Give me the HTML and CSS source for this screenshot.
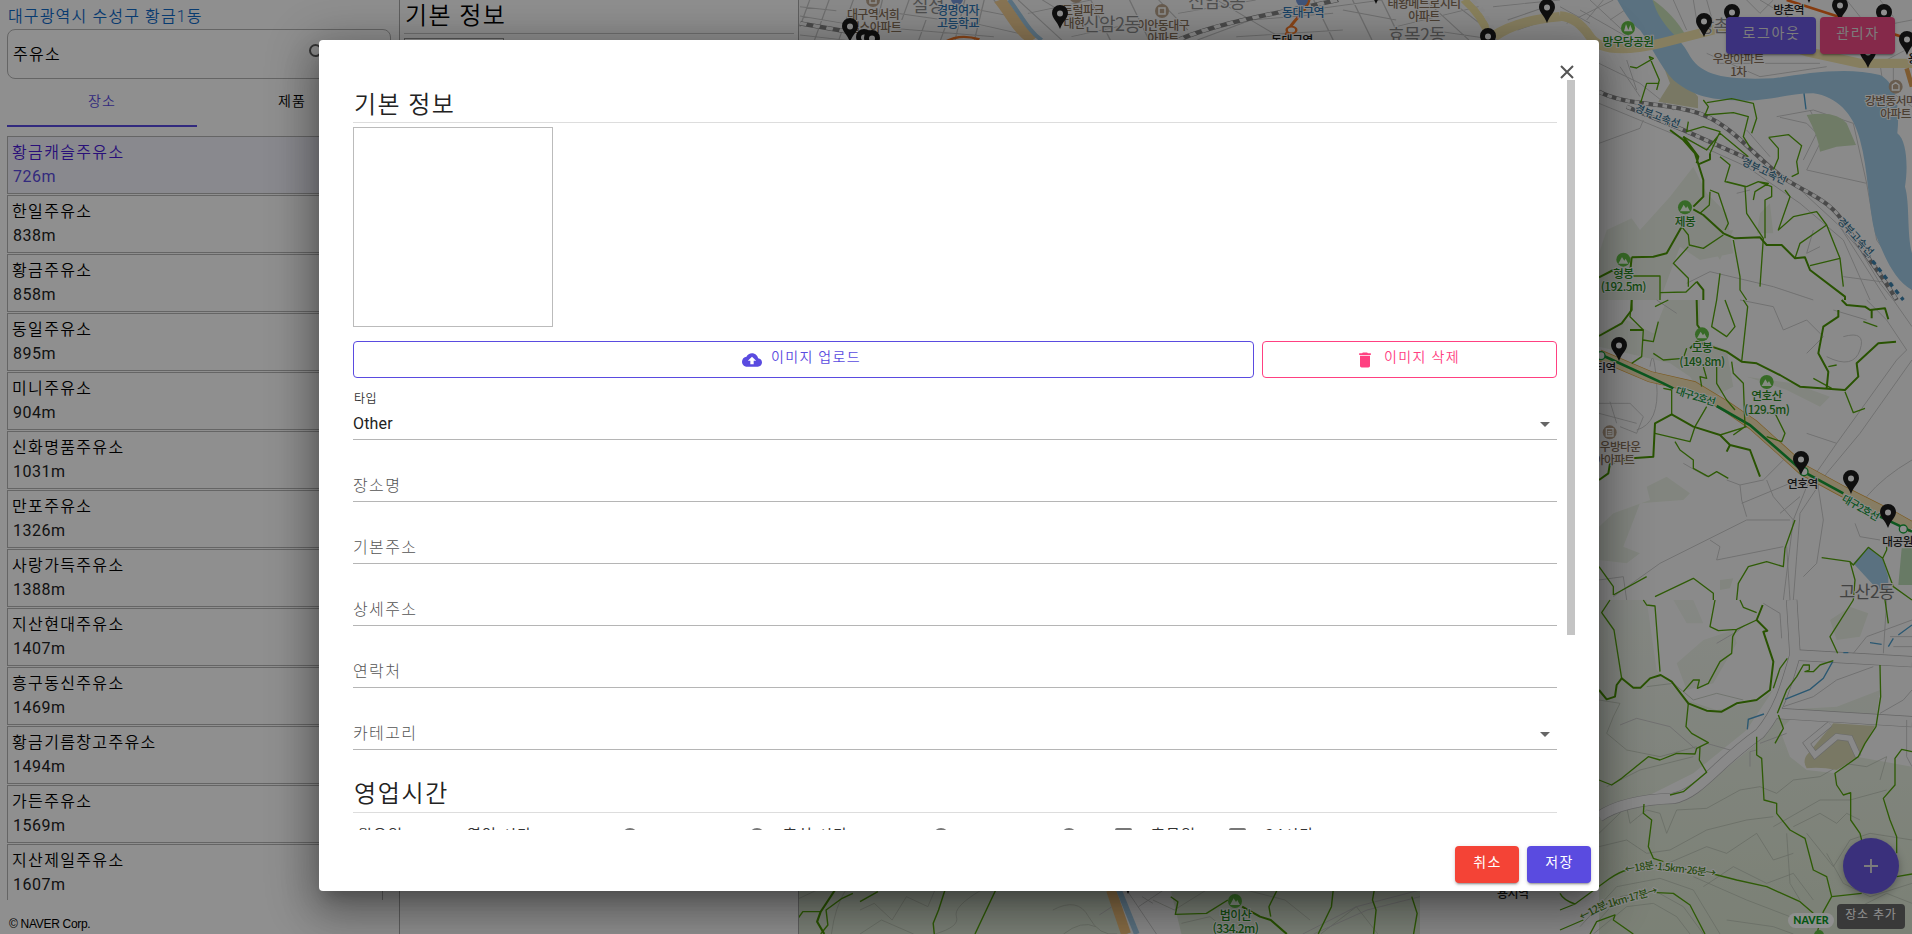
FILE: index.html
```html
<!DOCTYPE html>
<html lang="ko">
<head>
<meta charset="utf-8">
<title>장소 추가</title>
<link rel="stylesheet" href="styles.css">
</head>
<body>
<div class="app">
  <aside class="places">
    <div class="region">대구광역시 수성구 황금1동</div>
    <div class="search"><span>주유소</span>
      <svg class="search-icon" viewBox="0 0 24 24"><path d="M15.5 14h-.79l-.28-.27A6.47 6.47 0 0 0 16 9.500 6.500 6.500 0 1 0 9.500 16c1.610 0 3.090-.59 4.230-1.570l.27.28v.79l5 4.990L20.490 19l-4.990-5zm-6 0C7.010 14 5 11.990 5 9.500S7.010 5 9.500 5 14 7.010 14 9.500 11.990 14 9.500 14z"/></svg>
    </div>
    <div class="tabs"><div class="tab tab-active">장소</div><div class="tab">제품</div></div>
    <div class="list">
      <div class="place place-active"><b>황금캐슬주유소</b><span>726m</span></div>
      <div class="place"><b>한일주유소</b><span>838m</span></div>
      <div class="place"><b>황금주유소</b><span>858m</span></div>
      <div class="place"><b>동일주유소</b><span>895m</span></div>
      <div class="place"><b>미니주유소</b><span>904m</span></div>
      <div class="place"><b>신화명품주유소</b><span>1031m</span></div>
      <div class="place"><b>만포주유소</b><span>1326m</span></div>
      <div class="place"><b>사랑가득주유소</b><span>1388m</span></div>
      <div class="place"><b>지산현대주유소</b><span>1407m</span></div>
      <div class="place"><b>흥구동신주유소</b><span>1469m</span></div>
      <div class="place"><b>황금기름창고주유소</b><span>1494m</span></div>
      <div class="place"><b>가든주유소</b><span>1569m</span></div>
      <div class="place"><b>지산제일주유소</b><span>1607m</span></div>
    </div>
    <div class="copyright">© NAVER Corp.</div>
  </aside>
  <section class="detail">
    <h2 class="detail-title">기본 정보</h2>
    <div class="detail-photo"></div>
  </section>
  <main class="map">
    <svg class="map-canvas" viewBox="799 0 1113 934">
      <defs>
        <g id="pin"><path class="pin" d="M0 0C-3-8-8-11-8-16a8 8 0 0 1 16 0C8-11 3-8 0 0z"/><circle cy="-15.500" r="3" fill="#fff"/></g>
        <g id="mount"><circle r="21" fill="#62bd45"/><path d="M-15 12L-4-8 3 3 7-3 15 12z" fill="#effbe9"/></g>
        <g id="apt"><circle r="7" fill="#b9a58e"/><path d="M-3 3v-6h6v6z" fill="none" stroke="#fff" stroke-width="1.500"/></g>
        <linearGradient id="hill" x1="0" y1="0" x2="0" y2="1"><stop offset="0" stop-color="#edf1ea"/><stop offset="1" stop-color="#dce6d2"/></linearGradient>
      </defs>
      <rect x="799" width="1113" height="934" class="land"/>

      <!-- north strip -->
      <g transform="translate(800 0) scale(.4847 .3333)">
        <g class="street">
          <path d="M0 20L75 32M0 48L90 70M20 0L0 80M60 0L30 120M110 0L80 120M0 105L120 125M170 0L150 120M200 40L370 75M190 85L400 110M225 0L210 60M260 60L245 120M300 80L290 120M340 0L320 120M380 0L360 120M370 30L440 50M360 70L450 100M400 0L470 120M450 0L540 120M500 0L590 80M470 40L600 0M560 110L720 60M600 0L640 120M680 0L720 120M740 0L800 90M780 40L940 0M820 120L930 60L1100 40M860 0L1000 120M900 110L1120 90M1000 40L1200 0M1060 0L1100 120M1140 0L1180 120M1120 30L1230 60M1200 0L1240 120M1230 80L1400 20M1290 0L1380 120M1340 0L1420 90M1300 90L1440 120M1430 20L1568 0M1460 60L1540 20M1480 90L1540 60"/>
        </g>
        <path class="rail-bed" d="M0 70L110 98"/><path class="rail" d="M0 70L110 98"/>
        <path class="rail-bed" d="M780 120C860 70 950 50 1110 0"/><path class="rail" d="M780 120C860 70 950 50 1110 0"/>
        <path d="M412 0C440 50 450 90 480 120" stroke="#f2cf94" stroke-width="26" fill="none"/>
        <path d="M432 0C458 50 470 90 498 120" stroke="#a0cae4" stroke-width="10" fill="none"/>
        <path d="M1370 0Q1410 50 1425 120" stroke="#f5e6a5" stroke-width="18" fill="none"/>
        <path class="rail" d="M1388 0Q1425 50 1435 120"/>
        <path class="yellow" d="M1430 110Q1480 60 1568 50"/>
        <path d="M300 125Q330 100 370 118M1000 120C1010 60 1040 50 1050 0" stroke="#f47a2a" stroke-width="7" fill="none"/>
        <circle cx="1014" cy="90" r="10" fill="#fff" stroke="#f47a2a" stroke-width="5"/>
      </g>
      <use href="#apt" x="873" y="0"/><use href="#apt" x="1076" y="-4"/><use href="#apt" x="1162" y="11"/>
      <circle cx="957" cy="-1" r="6" fill="#7397d8"/><circle cx="1302" cy="0" r="6" fill="#7397d8"/>
      <g class="label brown" text-anchor="middle">
        <text x="873" y="19">대구역서희</text><text x="875" y="32">힐스아파트</text>
        <text x="1083" y="15">트럴파크</text><text x="1074" y="28">대현</text>
        <text x="1163" y="30">이안동대구</text><text x="1163" y="43">아파트</text>
        <text x="1424" y="8">태왕메트로시티</text><text x="1424" y="21">아파트</text>
      </g>
      <g class="label district"><text x="912" y="12">실정</text><text x="1083" y="31">신암2동</text><text x="1188" y="8">신암3동</text><text x="1388" y="42">효목2동</text></g>
      <g class="label blue" text-anchor="middle"><text x="958" y="15">경명여자</text><text x="958" y="28">고등학교</text><text x="1303" y="17">동대구역</text></g>
      <text class="label station" x="1271" y="45">동대구역</text>

      <!-- north-east -->
      <g transform="translate(1560 0) scale(.33333)">
        <path d="M117 760L140 690 215 655 240 690 330 590 400 500 440 580 500 640 520 760 420 780 360 740 300 900H117zM590 700L600 640 630 610 640 700zM430 700L520 690 480 780z" fill="#e8eee2"/>
        <g class="street">
          <path d="M60 30L200 110M90 0L230 130M130 0L80 60M0 20L90 70M20 70L160 0M150 60L210 20M117 190L240 250 340 330M180 200L240 290M200 180L230 270M117 430L240 385 250 360M340 0L380 90M400 0L410 60M440 0L460 70M560 0L600 40 640 0M600 0L700 60M860 0L900 50M900 90L1056 60M960 0L1000 50M440 160L600 230 800 200M470 190L780 190M650 350L760 330 880 370 920 550 950 720 1056 870M750 330L790 410 740 510 920 550M660 352L740 370 770 400 730 480M1056 140L960 190 970 260 1056 320M1000 190V300M560 390L630 470M700 550L830 670 900 750 960 850 1000 900M117 310L360 410 560 500 720 610 850 720 930 900M840 680L980 900M530 580L570 570M760 690L740 760 780 740M850 830L1000 850M380 850L450 815 640 860 760 900"/>
        </g>
        <path d="M280 0C320 30 350 60 380 110L300 120 255 60z" fill="#c8dfb7"/>
        <path d="M740 345Q830 330 860 370L888 435 830 440 780 455Q775 410 740 345z" fill="#c6dcb6"/>
        <path d="M295 160Q350 210 414 290V325L295 305 330 250z" fill="#d8d7b2"/>
        <path class="water" d="M172 0H278C300 80 360 110 385 160 420 230 500 240 640 235 740 220 860 200 960 225 1010 250 1020 320 1012 400 1040 420 1045 500 1035 560 1050 610 1040 700 1056 760V870C1000 840 970 760 945 700 925 620 925 510 900 420 880 340 830 290 760 280 690 280 640 300 560 302 480 300 410 300 340 240 300 200 270 130 240 90 210 70 190 30 172 0z"/>
        <path d="M732 280L738 328" class="stream"/>
        <path class="yellow" d="M0 48Q50 50 90 110T300 130L480 85Q620 110 740 155L900 190 1056 190"/>
        <path d="M1040 205L1056 260" stroke="#e1a258" stroke-width="14"/>
        <path d="M680 0L850 55 1056 120" stroke="#ef6a1c" stroke-width="8" fill="none"/>
        <path class="rail-bed" d="M117 275C200 320 330 305 430 345S600 490 680 540 810 600 860 680 950 800 1010 900"/>
        <path class="rail" d="M117 275C200 320 330 305 430 345S600 490 680 540 810 600 860 680 950 800 1010 900"/>
        <path class="rail-bed" d="M200 320L370 390 560 475"/><path class="rail" d="M200 320L370 390 560 475"/>
        <path class="rail blue-rail" d="M920 760L1030 900"/>
        <g class="trail">
          <path d="M210 200L230 204 280 175 268 170 285 210 298 240 290 270M298 250H260L242 308M430 300L445 320 435 345 520 338 565 350 550 410 572 445M440 308L515 296 580 310 590 355 575 400M385 365L380 395 430 380 480 395 450 460M370 410L440 450 480 400 565 470M626 412L686 404 725 437 710 485 715 520 695 530M626 412L655 445V475L640 510M480 470L510 495 495 545 555 560 560 640 610 715 600 860M500 545L560 560 595 545 635 560 635 590 615 600 615 715M595 545L625 550 585 575 580 600M675 570L690 590 655 690 700 650 770 635 800 675 840 775 850 860M800 675L720 730 705 775M840 775L750 797M450 570L475 580 505 670 495 690M450 575L448 615 420 640M365 680L385 705 388 735 430 745 490 705M385 740L340 790 385 835 385 860M300 878L378 876 410 845M220 828H300L300 900M520 720L540 830V870L560 900M480 820L470 900"/>
        </g>
        <g class="trail thick">
          <path d="M330 390L370 420 405 460 430 540V590L400 620M370 410L415 470 410 490M450 460L450 478 415 493M400 628L430 645 490 700 525 715 600 712 620 735H665L705 775 735 772 750 810 855 890V900M365 680L320 760 280 770 215 772M117 832L160 810M215 772L210 820M410 845L430 870V900"/>
        </g>
        <use href="#mount" x="375" y="622"/><use href="#mount" x="190" y="779"/>
        <circle cx="204" cy="84" r="21" fill="#62bd45"/><path d="M192 94L198 72 205 90 211 74 218 94z" fill="#fff"/>
        <circle cx="1007" cy="260" r="21" fill="#b9a58e"/><path d="M997 270V255L1007 248 1017 255V270z" fill="none" stroke="#fff" stroke-width="4"/>
        <g class="label big green" text-anchor="middle"><text x="204" y="139">망우당공원</text><text x="375" y="677">제봉</text><text x="190" y="835">형봉</text><text x="190" y="874">(192.5m)</text></g>
        <g class="label big brown" text-anchor="middle"><text x="535" y="189">우방아파트</text><text x="535" y="228">1차</text><text x="1007" y="315">강변동서마을</text><text x="1007" y="354">아파트</text></g>
        <g class="label big railname"><text transform="translate(222 333) rotate(21)">경부고속선</text><text transform="translate(543 493) rotate(25)">경부고속선</text><text transform="translate(830 665) rotate(47)">경부고속선</text></g>
        <text class="label big station" x="640" y="43">방촌역</text><text class="label district3" x="415" y="95">방촌동</text><text class="label big station" x="1044" y="190">용계역</text>
      </g>

      <!-- east -->
      <g transform="translate(1560 300) scale(.33333)">
        <path d="M117 100L200 60 280 100 320 0H420V120L500 150 520 260 440 300 390 230 330 190 117 140zM560 230L700 250 810 290 780 320 680 270zM160 640L270 600 260 560 320 530 390 580 370 600 240 610 190 740 240 760 200 790 117 780V680zM480 840L520 835 510 865 480 870z" fill="#e8eee2"/>
        <path d="M1025 745H1056V855H1015z" fill="#b9d9b5"/>
        <g class="street">
          <path d="M540 0L640 20 670 90 740 60 790 110 740 160M850 110Q920 90 900 150T800 170M920 0L980 60 1040 150 1010 180 830 430 740 560 700 660 670 900M1056 180L900 400 800 520 720 640 700 900M1000 0L1056 80M820 30L920 60M117 310L210 310 250 350 230 400 180 380M117 340L230 370M150 305L170 370M230 390Q300 370 290 250T270 200M290 0L350 40M500 540L540 555 610 540 670 480M540 555L545 600 560 650M440 530L370 490M545 610L690 550M560 660L300 790 160 890M560 660L690 660M620 540L640 590 700 660M660 640L720 590M740 400L830 430M770 530L790 660 770 790 730 830M450 720L480 740 470 780 670 740M117 840L190 830 200 900M885 670L900 710 960 720M920 590Q970 530 1056 480M680 740L690 900"/>
        </g>
        <path d="M117 165L270 230 400 260 500 320 580 375 730 510 850 575 1000 650 1056 682" fill="none" stroke="#dda03b" stroke-width="34"/>
        <path d="M117 165L270 230 400 260 500 320 580 375 730 510 850 575 1000 650 1056 682" fill="none" stroke="#f0dfb2" stroke-width="30"/>
        <path class="metro" d="M125 165L310 250 340 265M470 318L570 375 730 515 850 580M960 650L1056 695"/>
        <circle class="stop" cx="123" cy="167" r="12"/><circle class="stop" cx="732" cy="515" r="12"/><circle class="stop" cx="1030" cy="687" r="12"/>
        <path d="M880 790L925 742 968 778 985 830V885L940 855z" fill="#a0cae4"/>
        <g class="trail">
          <path d="M215 0L210 50 250 90 245 170 215 190M250 120L280 125 295 65M285 20L325 0M280 160L310 180 370 175 380 145M470 0L455 80 500 110 525 80 495 0M550 0L563 20 545 185M515 185L520 220 550 250 555 380 520 405M480 405L560 380M470 200L470 250 500 300 525 330M430 200L440 235 420 230 425 260M310 265L335 270V345M285 400L390 425 405 380 440 320M345 425L360 450 400 480V505L445 530 470 515 505 535M640 330L675 400 665 425 620 410M855 275L880 338 915 325M805 200L830 195M760 235L815 265M910 65L952 80M705 660L675 745 670 800 620 785 565 800 535 850 530 900M117 800L160 860V885M160 885L260 830M285 890L400 835 460 880V900M785 773L870 785 885 840 880 900M870 785L880 795 925 742 968 775 980 750V740M968 775L1000 860 1056 900"/>
        </g>
        <g class="trail thick">
          <path d="M117 108L185 70 215 30V0M210 90L250 90M410 0L412 75 430 100M390 145L410 125 500 155 545 185 590 190 660 225 720 260 855 270 895 230 890 190 955 130 1008 125M800 265L805 215 775 160 790 80 835 50 835 30M845 0L860 15 915 20 930 30 975 25 985 58M935 55L935 30M117 540L145 520 150 490 215 475 280 470 285 370 335 343 400 380 480 405 510 435 500 455M510 435L570 450 600 530"/>
        </g>
        <use href="#mount" x="426" y="103"/><use href="#mount" x="620" y="246"/>
        <circle cx="149" cy="397" r="21" fill="#b9a58e"/><path d="M139 386H159V408H139zM143 395H155M143 401H155" fill="none" stroke="#fff" stroke-width="4"/>
        <g class="label big green" text-anchor="middle"><text x="426" y="157">모봉</text><text x="426" y="198">(149.8m)</text><text x="620" y="301">연호산</text><text x="620" y="341">(129.5m)</text></g>
        <g class="label big brown"><text x="119" y="452">우방타운</text><text x="101" y="491">아아파트</text></g>
        <g class="label big station"><text x="106" y="217">티역</text><text x="681" y="563">연호역</text><text x="967" y="737">대공원역</text></g>
        <g class="label big metroname"><text transform="translate(345 282) rotate(17)">대구2호선</text><text transform="translate(843 602) rotate(30)">대구2호선</text></g>
        <text class="label district3 grey" x="838" y="895">고산2동</text>
      </g>

      <!-- south-east -->
      <g transform="translate(1560 600) scale(.33333)">
        <path d="M117 0H260L290 210 380 300 470 330 600 300 640 270 560 390 400 520 240 600 117 640zM340 0L400 0 430 70 380 70zM350 190L430 120 520 90 530 130 460 250 380 270zM660 330L830 320 960 270 945 380 900 370 700 350 660 390 690 470 740 510 830 520 890 470 1056 500V1002H117V650L330 600 480 520 590 430z" fill="url(#hill)"/>
        <path d="M810 60L870 20 925 40 900 110 830 120z" fill="#e8eee2"/>
        <g class="contour">
          <path d="M117 300L180 310 160 350 140 400 200 450 300 470 410 440M140 560L240 510 400 470M117 700L200 620 210 670 260 630 300 640 320 700 350 630 440 625 540 570 600 560 650 580 700 540 780 530 850 490 920 500 980 470 960 540M117 740L200 720 260 760 330 750 440 690 560 660 640 650M640 680L780 600 870 600 980 570M300 800L440 740 500 760 590 700 640 780 700 760M700 680L780 640 830 670 860 640 900 660M430 860L520 800 620 850 700 820 760 900M680 700L690 850 720 900M740 700L820 800 870 720 930 700 1056 720M117 960L180 890 280 870 370 920 430 1002M100 1002L200 920 280 910 350 950 390 1002M60 980L170 860 300 835 400 870 480 1002M400 830L560 900 690 950M500 960L640 980 700 1002M800 760L850 850 930 890 1056 850M880 930L980 880 1056 910M260 260L340 250 400 300 470 280 550 300"/>
        </g>
        <g class="road-edge"><path d="M117 650Q190 600 340 595C420 580 470 490 600 400 660 330 680 250 705 165L695 0"/><path d="M705 165L1056 185M650 340L1056 365"/></g>
        <g class="road"><path d="M117 650Q190 600 340 595C420 580 470 490 600 400 660 330 680 250 705 165L695 0"/><path d="M705 165L1056 185M650 340L1056 365"/></g>
        <path d="M820 370L945 378 915 430 890 470Q850 500 830 510 780 500 740 505 725 480 745 460z" fill="#d8d7b2"/>
        <path d="M810 372L740 430 765 465 830 410 870 415 895 470" stroke="#bbb" stroke-width="20" fill="none"/><path d="M810 372L740 430 765 465 830 410 870 415 895 470" stroke="#f4f4f4" stroke-width="16" fill="none"/>
        <g class="street"><path d="M180 375L230 355 330 380 410 450M440 430L510 450M610 10L660 40 665 115M470 130L530 95 555 75M570 500V455L590 450M600 430L680 400M670 320L760 290 830 240 940 200M980 0L970 160M880 160L920 110 1056 60M990 110H1056M1000 140H1056M960 340L1030 300 1056 270M1040 360V470L1056 500"/></g>
        <g class="stream"><path d="M562 388L565 358 612 342M675 298L750 268 790 235 818 185M850 158H865M930 128L965 133M985 140L1000 115M1015 105L1056 75"/></g>
        <g class="trail">
          <path d="M150 0L125 38 162 90 185 235M250 0L260 15 285 18 300 215M465 0L450 80 475 92 530 88 518 110 515 160 480 185 445 250 412 265 418 240 400 240 370 275M530 88L590 60M540 0L550 22 590 38M385 310L378 380 395 400 445 428 410 445 405 462 350 460 300 480 265 470 185 535 155 555 117 540M420 440L418 480 440 517 370 575 330 585M590 410V465L605 475 612 600 650 610 650 640 690 690 735 715 760 810 800 830 815 890 790 935 770 1002M252 612L250 640 275 660 265 740 280 775 310 785M655 345L670 385 645 430M652 340L680 270 710 230 730 195H748V210L735 215 760 215 780 195 820 182M682 175L660 205 640 265M880 0L810 110 833 160M960 195L962 290 948 380 915 430 895 470 825 520 830 555 850 585 872 578V660L900 700 905 720M1056 455L1025 448 1005 475V555L970 595 990 660 1010 710 1010 760M975 0L985 70M1010 830L1056 822M815 890L905 880M200 810Q180 815 150 835L45 912 0 930M460 822L530 840 620 860 720 905 760 940M290 878L340 880 390 915 435 1002M0 990L70 960M90 1002L110 965 165 945 160 960 220 1002M0 880Q10 900 45 912"/>
        </g>
        <g class="trail thick"><path d="M117 270L140 298 165 290 170 255 185 235 220 263H242L270 235 302 225 335 245 385 310 440 332 485 335 530 310 590 300 630 270 640 185 610 95 622 92 590 60 608 15"/></g>
        <g class="label big course"><text transform="translate(196 820) rotate(-10)">←18분</text><text transform="translate(283 808) rotate(7)">·1.5km·26분→</text><text transform="translate(65 962) rotate(-28)">←12분</text><text transform="translate(139 925) rotate(-16)">·1km·17분→</text></g>
      </g>

      <!-- south strip -->
      <g transform="translate(860 740) scale(.35714 .33333)">
        <path d="M-180 450H700L750 582H-180zM870 450H1568V582H900z" fill="#dce6d4"/>
        <g class="contour"><path d="M-180 480L-120 450M-80 582Q-70 500-40 450M0 510L40 490 90 540 130 470 190 500 210 450M0 582L60 540 150 582M210 582Q280 560 270 530T340 450M540 510Q610 470 640 530T720 582M570 582Q620 540 660 560M820 480L880 510 970 450M900 550L980 530 1040 582M1080 450L1190 480 1260 540M1290 582L1390 500 1450 582"/></g>
        <g class="street"><path d="M670 525L720 490M750 455L830 582M790 470L820 490M780 500L850 450M1240 582L1390 500 1568 450M1270 582L1420 510 1568 470"/></g>
        <path d="M703 450L745 582" stroke="#f2c27d" stroke-width="28"/><path d="M725 450L775 582" stroke="#a0cae4" stroke-width="16"/>
        <g class="trail"><path d="M50 455L0 485M238 450L220 510 205 550 208 582M380 450L322 582M-180 545L-160 515H-110M-20 460L-50 475-95 510-90 555-110 582M870 470L890 485 883 523 970 520 1030 480M1168 450L1145 500 1150 530M1325 450L1320 500 1283 582M1440 450L1435 480 1445 510 1438 582M1545 470L1560 520 1550 582"/></g>
        <g class="trail thick"><path d="M-70 450L-110 515-120 545-100 582M1070 500L1120 530 1150 540 1195 582"/></g>
      </g>
      <g transform="translate(1235 901) scale(.333)"><use href="#mount"/></g>
      <g class="label green" text-anchor="middle"><text x="1235.500" y="920">법이산</text><text x="1235.500" y="933">(334.2m)</text></g>
      <text class="label station" x="1497" y="898">용지역</text>
      <circle cx="1819" cy="935" r="5" fill="#62bd45"/>

      <use href="#pin" x="850" y="42"/><use href="#pin" x="864" y="53"/><use href="#pin" x="872" y="54"/><use href="#pin" x="1060" y="29"/><use href="#pin" x="1376" y="4"/><use href="#pin" x="1488" y="52"/><use href="#pin" x="1547" y="23"/><use href="#pin" x="1704" y="37"/><use href="#pin" x="1732" y="28"/><use href="#pin" x="1840" y="21"/><use href="#pin" x="1884" y="28"/><use href="#pin" x="1868" y="68"/><use href="#pin" x="1907" y="55"/><use href="#pin" x="1809" y="3"/><use href="#pin" x="1619" y="361"/><use href="#pin" x="1801" y="475"/><use href="#pin" x="1851" y="494"/><use href="#pin" x="1888" y="528"/><use href="#pin" x="1128" y="894"/>
    </svg>
    <div class="map-actions"><button class="btn btn-primary btn-logout">로그아웃</button><button class="btn btn-pink">관리자</button></div>
    <div class="map-corner">
      <div class="fab"><svg viewBox="0 0 24 24"><path d="M19 12.900h-6.100V19h-1.800v-6.100H5v-1.800h6.100V5h1.800v6.100H19z"/></svg></div>
      <div class="corner-row"><span class="naver">NAVER</span><span class="tooltip">장소 추가</span></div>
    </div>
  </main>
</div>
<div class="scrim">
  <div class="dialog">
    <svg class="close" viewBox="0 0 14 14"><path d="M1 1l12 12M13 1L1 13"/></svg>
    <div class="dialog-body">
      <div class="form">
        <h2 class="title">기본 정보</h2>
        <div class="photo"></div>
        <div class="photo-actions">
          <button class="outline outline-primary"><svg viewBox="0 0 24 24"><path d="M19.350 10.040C18.670 6.590 15.640 4 12 4 9.110 4 6.600 5.640 5.350 8.040 2.340 8.360 0 10.910 0 14c0 3.310 2.690 6 6 6h13c2.760 0 5-2.240 5-5 0-2.640-2.050-4.780-4.650-4.960zM14 13v4h-4v-4H7l5-5 5 5h-3z"/></svg><span>이미지 업로드</span></button>
          <button class="outline outline-pink"><svg viewBox="0 0 24 24"><path d="M6 19c0 1.100.9 2 2 2h8c1.100 0 2-.9 2-2V7H6v12zM19 4h-3.500l-1-1h-5l-1 1H5v2h14V4z"/></svg><span>이미지 삭제</span></button>
        </div>
        <div class="field field-filled"><small>타입</small><span>Other</span><i class="arrow"></i></div>
        <div class="field"><label>장소명</label></div>
        <div class="field"><label>기본주소</label></div>
        <div class="field"><label>상세주소</label></div>
        <div class="field"><label>연락처</label></div>
        <div class="field"><label>카테고리</label><i class="arrow"></i></div>
        <h2 class="title title-hours">영업시간</h2>
        <div class="hours">
          <span class="h-day">월요일</span><span class="h-open">영업 시간</span><i class="clock c1"></i><i class="clock c2"></i>
          <span class="h-rest">휴식 시간</span><i class="clock c3"></i><i class="clock c4"></i>
          <i class="check"></i><span class="h-off">휴무일</span><i class="check"></i><span>24시간</span>
        </div>
      </div>
      <div class="scrollbar"></div>
    </div>
    <div class="dialog-actions"><button class="btn btn-red">취소</button><button class="btn btn-primary">저장</button></div>
  </div>
</div>
</body>
</html>
```
FILE: styles.css
```css
* { box-sizing: border-box; }
body { margin: 0; width: 1912px; height: 934px; overflow: hidden; font-family: Roboto, "Noto Sans CJK KR", sans-serif; font-size: 16px; color: #000; background: #fff; }
button { font: inherit; border: 0; padding: 0; }
.app { display: flex; width: 1912px; height: 934px; }

.places { width: 400px; height: 934px; border-right: 1px solid #aaa; padding: 4px 0 0 7px; display: flex; flex-direction: column; font-weight: 350; }
.region { height: 25px; line-height: 26px; padding-left: 1px; color: #0f6ac8; letter-spacing: 1.150px; flex: none; }
.search { width: 384px; height: 50px; flex: none; border: 1px solid #b4b4b4; border-radius: 8px; display: flex; align-items: center; justify-content: space-between; padding: 0 60px 2px 5px; letter-spacing: 1.280px; }
.search-icon { width: 24px; height: 24px; fill: #616161; flex: none; }
.tabs { display: flex; width: 380px; height: 48px; flex: none; margin-bottom: 9px; }
.tab { flex: 1; text-align: center; font-size: 14px; line-height: 44px; letter-spacing: 1.200px; font-weight: 350; }
.tab-active { color: #5a4be0; border-bottom: 2px solid #5a4be0; }
.list { height: 764px; flex: none; width: 376px; overflow: hidden; display: flex; flex-direction: column; gap: 1px; }
.place { height: 58px; flex: none; border: 1px solid #b4b4b4; padding: 4px 4px 2px; display: flex; flex-direction: column; line-height: 24px; }
.place b { font-weight: 350; letter-spacing: 1.350px; height: 24px; }
.place span { letter-spacing: .5px; font-weight: 400; height: 24px; color: #222; padding-left: 1px; }
.place-active { background: #f5f4fd; color: #4a1bd8; }
.place-active span { color: #5a4be0; }
.copyright { padding: 16px 0 0 2px; font: 12px/16px "Liberation Sans", sans-serif; letter-spacing: -.3px; }

.detail { width: 399px; height: 934px; padding: 0 4px; border-right: 1px solid #aaa; }
.detail-title { margin: 0; height: 34px; line-height: 32px; font-size: 24px; font-weight: 350; letter-spacing: 1.400px; padding-left: 1px; border-bottom: 1px solid #c8c8c8; }
.detail-photo { width: 100px; height: 200px; margin-top: 4px; border: 1px solid #999; }

.map { position: relative; width: 1113px; height: 934px; }
.map-canvas { display: block; width: 1113px; height: 934px; }
.land { fill: #f7f7f7; }
.street path { fill: none; stroke: #c6c6c6; stroke-width: 2.800; }
.contour path { fill: none; stroke: #b3bbae; stroke-width: 2; }
.road path { fill: none; stroke: #f4f4f4; stroke-width: 30; }
.road-edge path { fill: none; stroke: #b5b5b5; stroke-width: 34; }
.water { fill: #a0cae4; }
.stream { fill: none; stroke: #4b9cca; stroke-width: 4; }
.yellow { fill: none; stroke: #efe1a9; stroke-width: 28; }
.rail-bed { fill: none; stroke: #858585; stroke-width: 13; }
.rail { fill: none; stroke: #f2f2f2; stroke-width: 10; stroke-dasharray: 14 14; }
.blue-rail { stroke: #3c80ac; }
.trail path { fill: none; stroke: #54a30c; stroke-width: 4; stroke-linejoin: round; }
.thick path { stroke-width: 6; stroke: #4a9404; }
.metro { fill: none; stroke: #179c38; stroke-width: 8; }
.stop { fill: #fff; stroke: #17a53a; stroke-width: 4; }
.pin { fill: #1c1c1c; }
.label { font-family: "Noto Sans CJK KR", sans-serif; font-size: 12px; font-weight: 500; letter-spacing: -.6px; paint-order: stroke; stroke: #f7f7f7; stroke-width: 2px; }
.big { font-size: 35px; stroke-width: 6px; letter-spacing: -1.500px; }
.brown { fill: #87705a; }
.blue { fill: #2e76b5; }
.green { fill: #268a1c; }
.station { fill: #222; }
.railname { fill: #35708f; font-size: 31px; letter-spacing: 0; }
.metroname { fill: #12943a; font-size: 31px; letter-spacing: -2px; }
.course { fill: #4d8b22; font-size: 31px; letter-spacing: -2px; }
.district { font-size: 18px; fill: #8e8e8e; font-weight: 400; }
.district3 { font-size: 52px; fill: #8e8e8e; stroke-width: 6px; letter-spacing: -2px; font-weight: 400; }
.grey { fill: #777; }

.map-actions { position: absolute; top: 17px; right: 17px; display: flex; gap: 4px; }
.btn { height: 37px; width: 64px; border-radius: 4px; color: #fff; font-size: 14px; letter-spacing: 1.250px; padding: 0 0 7px 1px; box-shadow: 0 3px 1px -2px rgba(0,0,0,.2), 0 2px 2px rgba(0,0,0,.14), 0 1px 5px rgba(0,0,0,.12); }
.btn-primary { background: #5a4be0; }
.btn-red { background: #f44336; }
.btn-logout, .btn-pink { letter-spacing: 1.600px; color: #ddd; background: #6a58df; }
.btn-logout { width: 90px; }
.btn-pink { width: 75px; background: #ee4a84; }
.map-corner { position: absolute; right: 7px; bottom: 5px; display: flex; flex-direction: column; align-items: flex-end; gap: 10px; }
.fab { width: 56px; height: 56px; margin-right: 6px; border-radius: 50%; background: #6857de; display: flex; align-items: center; justify-content: center; box-shadow: 0 3px 8px rgba(0,0,0,.3); }
.fab svg { width: 24px; height: 24px; fill: #ddd; }
.corner-row { display: flex; gap: 3px; align-items: center; height: 25px; }
.naver { width: 46px; height: 15px; margin-top: 7px; border-radius: 8px; background: #fff; color: #0a9a24; font: 900 10.500px/15px Lato, sans-serif; text-align: center; letter-spacing: .1px; }
.tooltip { width: 68px; height: 25px; border-radius: 4px; background: #666; color: #fff; text-align: center; font-size: 12px; line-height: 23px; letter-spacing: .9px; }

.scrim { position: absolute; inset: 0; background: rgba(0,0,0,.44); padding: 40px 0 0 319px; }
.dialog { position: relative; width: 1280px; height: 851px; background: #fff; border-radius: 4px; padding: 40px 24px 0 34px; box-shadow: 0 11px 15px -7px rgba(0,0,0,.2), 0 24px 38px 3px rgba(0,0,0,.14), 0 9px 46px 8px rgba(0,0,0,.3); }
.close { position: absolute; right: 25px; top: 25px; width: 14px; height: 14px; fill: none; stroke: #555; stroke-width: 2; }
.dialog-body { display: flex; gap: 10px; height: 750px; overflow: hidden; }
.form { width: 1204px; }
.scrollbar { width: 8px; height: 555px; background: #c4c4c4; }
.title { margin: 0; height: 43px; line-height: 51px; font-size: 24px; font-weight: 350; letter-spacing: 1.400px; color: #222; padding-left: 1px; border-bottom: 1px solid #ddd; }
.photo { width: 200px; height: 200px; margin-top: 4px; border: 1px solid #bbb; }
.photo-actions { display: flex; gap: 8px; margin-top: 14px; }
.outline { height: 37px; border: 1px solid; border-radius: 4px; background: #fff; font-size: 14px; letter-spacing: 1.350px; display: flex; align-items: center; justify-content: center; gap: 9px; padding-right: 4px; }
.outline svg { width: 20px; height: 20px; fill: currentColor; }
.outline span { padding-bottom: 7px; font-weight: 350; }
.outline-primary { width: 901px; color: #5a4be0; }
.outline-pink { width: 295px; color: #ff4081; }
.field { position: relative; height: 62px; border-bottom: 1px solid #b5b5b5; padding-top: 33px; }
.field label { display: block; line-height: 26px; font-weight: 300; letter-spacing: 1.400px; color: #555; }
.field-filled { padding-top: 13px; display: flex; flex-direction: column; }
.field-filled small { font-size: 12px; line-height: 16px; height: 20px; font-weight: 350; color: #333; padding-left: 1px; letter-spacing: .5px; }
.field-filled span { line-height: 26px; color: #222; letter-spacing: .15px; }
.arrow { position: absolute; right: 7px; top: 44px; border: 5px solid transparent; border-top-color: #666; border-bottom: 0; }
.title-hours { height: 63px; line-height: 88px; letter-spacing: 1.700px; }
.hours { display: flex; height: 40px; padding: 11px 0 0 5px; font-size: 15px; line-height: 22px; letter-spacing: 1.300px; color: #333; }
.h-day { width: 109px; }
.h-open { width: 155px; }
.clock { width: 16px; height: 16px; border: 2px solid #777; border-radius: 50%; margin-top: 4px; flex: none; }
.c1 { margin-right: 111px; }
.c2 { margin-right: 18px; }
.h-rest { width: 150px; }
.c3 { margin-right: 112px; }
.c4 { margin-right: 38px; }
.check { width: 17px; height: 17px; border: 2px solid #777; border-radius: 2px; margin: 4px 19px 0 0; flex: none; }
.h-off { width: 78px; }
.dialog-actions { display: flex; justify-content: flex-end; gap: 8px; margin: 16px -16px 0 0; }
```
